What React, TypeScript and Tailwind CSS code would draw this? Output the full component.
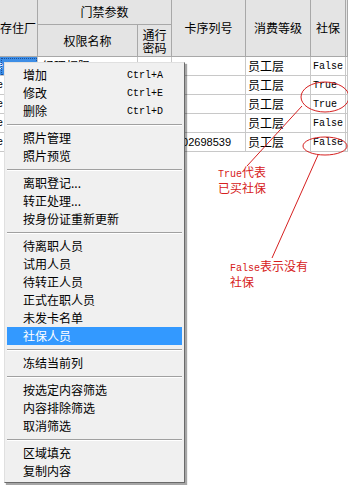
import React from 'react';

const cjk = { fontFamily: '"SimSun", "Noto Sans CJK SC", sans-serif' };
const mono = { fontFamily: '"Liberation Mono", "Courier New", monospace' };

type MenuEntry = { label: string; key?: string; active?: boolean } | 'sep';

const menu: MenuEntry[] = [
  { label: '增加', key: 'Ctrl+A' },
  { label: '修改', key: 'Ctrl+E' },
  { label: '删除', key: 'Ctrl+D' },
  'sep',
  { label: '照片管理' },
  { label: '照片预览' },
  'sep',
  { label: '离职登记...' },
  { label: '转正处理...' },
  { label: '按身份证重新更新' },
  'sep',
  { label: '待离职人员' },
  { label: '试用人员' },
  { label: '待转正人员' },
  { label: '正式在职人员' },
  { label: '未发卡名单' },
  { label: '社保人员', active: true },
  'sep',
  { label: '冻结当前列' },
  'sep',
  { label: '按选定内容筛选' },
  { label: '内容排除筛选' },
  { label: '取消筛选' },
  'sep',
  { label: '区域填充' },
  { label: '复制内容' },
];

const rows = [
  { perm: '经理权限', card: '', level: '员工层', ss: 'False' },
  { perm: '', card: '', level: '员工层', ss: 'True' },
  { perm: '', card: '', level: '员工层', ss: 'True' },
  { perm: '', card: '', level: '员工层', ss: 'False' },
  { perm: '', card: '102698539', level: '员工层', ss: 'False' },
];

const cols = 'grid grid-cols-[38px_100px_34px_74px_65px_35px_1fr]';
const hd = 'bg-[#e4e4e4] border-r border-b border-[#a8a8a8] flex items-center justify-center text-[12px] text-black';
const cell = 'h-[19px] border-r border-b border-[#c8c8c8] flex items-center overflow-hidden whitespace-nowrap text-black';

export default function App() {
  return (
    <div className="relative w-[348px] h-[485px] bg-white overflow-hidden" style={cjk}>
      {/* Grid header */}
      <div className={`${cols} grid-rows-[25px_32px]`}>
        <div className={`${hd} row-span-2 justify-start overflow-hidden`}>
          <span className="-ml-[12px] whitespace-nowrap">寄存住厂</span>
        </div>
        <div className={`${hd} col-span-2`}>门禁参数</div>
        <div className={`${hd} row-span-2`}>卡序列号</div>
        <div className={`${hd} row-span-2`}>消费等级</div>
        <div className={`${hd} row-span-2`}>社保</div>
        <div className={`${hd} row-span-2`}></div>
        <div className={hd}>权限名称</div>
        <div className={`${hd} flex-col leading-[13px]`}>
          <span>通行</span>
          <span>密码</span>
        </div>
      </div>

      {/* Rows */}
      {rows.map((r, i) => (
        <div key={i} className={cols}>
          <div
            className={`${cell} justify-start ${
              i === 0 ? 'bg-[#3d8ee6] outline outline-1 outline-dotted outline-[#1b4f9c] -outline-offset-2 text-white' : ''
            }`}
          >
            <span className="-ml-[3px] text-[10px]" style={mono}>e</span>
          </div>
          <div className={`${cell} pl-1`}>
            <span className="text-[12px]">{r.perm}</span>
          </div>
          <div className={cell}></div>
          <div className={`${cell} pl-[4px]`}>
            <span className="text-[11px]" style={{ fontFamily: '"Liberation Sans", Arial, sans-serif' }}>
              {r.card}
            </span>
          </div>
          <div className={`${cell} pl-[2px]`}>
            <span className="text-[12px]">{r.level}</span>
          </div>
          <div className={`${cell} pl-[2px]`}>
            <span className="text-[10px]" style={mono}>
              {r.ss}
            </span>
          </div>
          <div className={cell}></div>
        </div>
      ))}

      {/* Context menu */}
      <div className="absolute left-[4px] top-[62px] w-[181px] bg-[#f0f0f0] border border-t-[#e0e0e0] border-l-[#e0e0e0] border-r-[#6a6a6a] border-b-[#6a6a6a] shadow-[2px_2px_1px_rgba(0,0,0,0.35)] pt-[3px] pb-[2px] px-[2px] flex flex-col">
        {menu.map((m, i) =>
          m === 'sep' ? (
            <div key={i} className="h-[9px] flex flex-col justify-center">
              <div className="border-t border-[#a0a0a0]" />
              <div className="border-t border-white" />
            </div>
          ) : (
            <div
              key={i}
              className={`h-[18px] flex items-center pl-[16px] ${
                m.active ? 'bg-[#3399ff] text-white' : 'text-black'
              }`}
            >
              <span className="w-[104px] whitespace-nowrap text-[12px]">{m.label}</span>
              {m.key && (
                <span className="text-[10px]" style={mono}>
                  {m.key}
                </span>
              )}
            </div>
          )
        )}
      </div>

      {/* Red annotations */}
      <svg className="absolute inset-0 pointer-events-none" width="348" height="485" viewBox="0 0 348 485">
        <ellipse cx="325" cy="97" rx="24" ry="15" fill="none" stroke="#d62020" strokeWidth="1" />
        <ellipse cx="325" cy="146" rx="22" ry="9" fill="none" stroke="#d62020" strokeWidth="1" />
        <line x1="302" y1="106" x2="247" y2="166" stroke="#d62020" strokeWidth="1" />
        <line x1="318" y1="155" x2="272" y2="258" stroke="#d62020" strokeWidth="1" />
      </svg>
      <div className="absolute left-[218px] top-[165px] leading-[13px] text-[#d62020]">
        <div className="text-[12px]">
          <span className="text-[10px]" style={mono}>True</span>代表
        </div>
        <div className="text-[12px]">已买社保</div>
      </div>
      <div className="absolute left-[230px] top-[259px] leading-[13px] text-[#d62020]">
        <div className="text-[12px]">
          <span className="text-[10px]" style={mono}>False</span>表示没有
        </div>
        <div className="text-[12px]">社保</div>
      </div>
    </div>
  );
}
